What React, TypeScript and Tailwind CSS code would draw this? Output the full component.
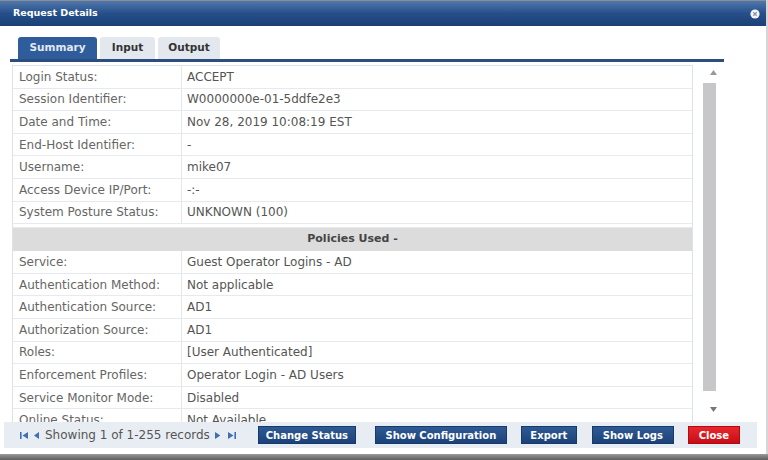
import React from 'react'

const summary: [string, string][] = [
  ['Login Status:', 'ACCEPT'],
  ['Session Identifier:', 'W0000000e-01-5ddfe2e3'],
  ['Date and Time:', 'Nov 28, 2019 10:08:19 EST'],
  ['End-Host Identifier:', '-'],
  ['Username:', 'mike07'],
  ['Access Device IP/Port:', '-:-'],
  ['System Posture Status:', 'UNKNOWN (100)'],
]

const policies: [string, string][] = [
  ['Service:', 'Guest Operator Logins - AD'],
  ['Authentication Method:', 'Not applicable'],
  ['Authentication Source:', 'AD1'],
  ['Authorization Source:', 'AD1'],
  ['Roles:', '[User Authenticated]'],
  ['Enforcement Profiles:', 'Operator Login - AD Users'],
  ['Service Monitor Mode:', 'Disabled'],
  ['Online Status:', 'Not Available'],
]

const font = { fontFamily: '"DejaVu Sans", Verdana, sans-serif' }

function Row({ label, value }: { label: string; value: string }) {
  return (
    <div className="flex h-[22.6px] shrink-0 items-center border-b border-[#e6eaef] text-[12px]">
      <div className="flex h-full w-[169px] shrink-0 items-center border-r border-[#e3e7ec] pl-[6px] text-[#666]">
        {label}
      </div>
      <div className="pl-[5px] text-[#555]">{value}</div>
    </div>
  )
}

function Tri({ dir, color = '#3f6fb5', bar = false }: { dir: 'l' | 'r'; color?: string; bar?: boolean }) {
  return (
    <svg width={bar ? 8 : 5} height="7" viewBox={bar ? '0 0 8 7' : '0 0 5 7'}>
      {dir === 'l' ? (
        <>
          {bar && <rect x="0" y="0" width="1.6" height="7" fill={color} />}
          <polygon points={bar ? '8,0 8,7 2.5,3.5' : '5,0 5,7 0,3.5'} fill={color} />
        </>
      ) : (
        <>
          <polygon points="0,0 0,7 5.5,3.5" fill={color} />
          {bar && <rect x="6.4" y="0" width="1.6" height="7" fill={color} />}
        </>
      )}
    </svg>
  )
}

function Btn({ label, w, ml, red = false }: { label: string; w: number; ml: number; red?: boolean }) {
  return (
    <button
      type="button"
      style={{ width: w, marginLeft: ml }}
      className={
        'flex h-[18px] shrink-0 items-center justify-center border text-[10px] font-bold text-white ' +
        (red
          ? 'border-[#b30a12] bg-gradient-to-b from-[#e8262e] to-[#c80c15]'
          : 'border-[#173a69] bg-gradient-to-b from-[#2f5a94] to-[#1c4279]')
      }
    >
      {label}
    </button>
  )
}

export default function App() {
  return (
    <div className="flex h-[460px] w-[768px] flex-col overflow-hidden bg-[#d6d6d6]" style={font}>
      <div className="flex h-[454px] w-[766px] flex-col bg-white">
        {/* Title bar */}
        <div className="flex h-[26px] shrink-0 items-center justify-between border-t border-[#8d8d8d] bg-gradient-to-b from-[#5078ae] via-[#264f8a] to-[#1c3f76] pl-[13px] pr-[6px]">
          <span className="text-[9.5px] font-bold text-white">Request Details</span>
          <svg width="10" height="10" viewBox="0 0 10 10">
            <circle cx="5" cy="5" r="4.6" fill="#f2f4f7" />
            <path d="M3.3 3.3 L6.7 6.7 M6.7 3.3 L3.3 6.7" stroke="#8a96a8" strokeWidth="1.3" />
          </svg>
        </div>

        {/* Body */}
        <div className="flex flex-col px-[10px] pt-[11px]">
          <div className="flex items-end gap-[3px] pl-[8px]">
            <div className="flex h-[22px] w-[79px] items-center justify-center rounded-t-[3px] bg-[#2f5d9b] text-[10.5px] font-bold text-[#e3e9f2]">
              Summary
            </div>
            <div className="flex h-[22px] w-[55px] items-center justify-center rounded-t-[3px] bg-[#e3e8ef] text-[10.5px] font-bold text-[#333]">
              Input
            </div>
            <div className="flex h-[22px] w-[62px] items-center justify-center rounded-t-[3px] bg-[#e3e8ef] text-[10.5px] font-bold text-[#333]">
              Output
            </div>
          </div>
          <div className="h-[3px] w-[714px] bg-[#2c4d7f]" />

          <div className="mt-[3px] flex h-[357px] overflow-hidden">
            {/* Table */}
            <div className="ml-[2px] flex w-[681px] flex-col border-x border-t border-[#dde3ea]">
              {summary.map(([l, v]) => (
                <Row key={l} label={l} value={v} />
              ))}
              <div className="h-[4px] shrink-0 border-b border-[#e6eaef]" />
              <div className="flex h-[23px] shrink-0 items-center justify-center bg-[#dcdcdc] text-[11px] font-bold text-[#444]">
                Policies Used -
              </div>
              {policies.map(([l, v]) => (
                <Row key={l} label={l} value={v} />
              ))}
            </div>
            {/* Scrollbar */}
            <div className="ml-[4px] flex w-[25px] flex-col items-center pt-[5px]">
              <svg width="7" height="5" viewBox="0 0 7 5" className="ml-[8px]">
                <polygon points="3.5,0 7,5 0,5" fill="#999" />
              </svg>
              <div className="mt-[8px] h-[308px] w-[13px] bg-[#c7c7c9]" />
              <svg width="7" height="5" viewBox="0 0 7 5" className="ml-[8px] mt-[16px]">
                <polygon points="0,0 7,0 3.5,5" fill="#777" />
              </svg>
            </div>
          </div>
        </div>

        {/* Footer */}
        <div className="mx-[4px] flex h-[26px] w-[753px] items-center bg-[#e8edf3] pl-[16px] text-[12px] text-[#555]">
          <Tri dir="l" bar />
          <span className="ml-[6px] flex">
            <Tri dir="l" />
          </span>
          <span className="ml-[6px]">Showing 1 of 1-255 records</span>
          <span className="ml-[5px] flex">
            <Tri dir="r" />
          </span>
          <span className="ml-[8px] flex">
            <Tri dir="r" bar />
          </span>
          <Btn label="Change Status" w={98} ml={22} />
          <Btn label="Show Configuration" w={132} ml={19} />
          <Btn label="Export" w={56} ml={14} />
          <Btn label="Show Logs" w={82} ml={15} />
          <Btn label="Close" w={52} ml={14} red />
        </div>
      </div>
      <div className="h-[6px] w-full bg-gradient-to-b from-[#9a9a9a] to-[#5e5e5e]" />
    </div>
  )
}
